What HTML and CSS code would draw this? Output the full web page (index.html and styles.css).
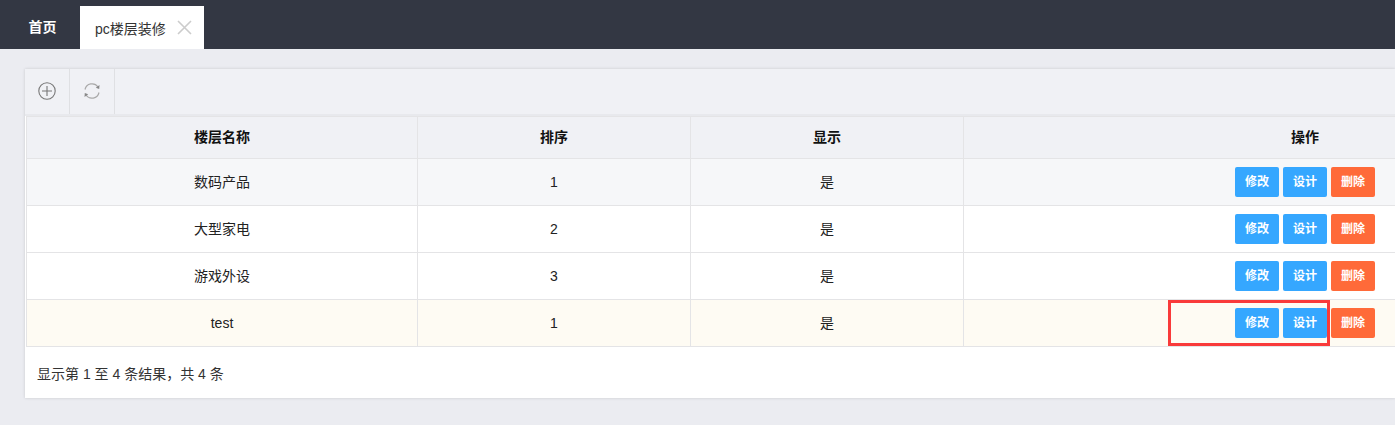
FILE: index.html
```html
<!DOCTYPE html>
<html lang="zh">
<head>
<meta charset="utf-8">
<title>pc楼层装修</title>
<link rel="stylesheet" href="styles.css">
</head>
<body>
<header class="tabbar">
  <a class="tab tab-home">首页</a>
  <a class="tab tab-active">pc楼层装修
    <svg class="tab-close" width="15" height="15" viewBox="0 0 15 15"><path d="M1 1l13 13M14 1L1 14" fill="none" stroke="#ccc" stroke-width="1.600"/></svg>
  </a>
</header>
<main class="content">
  <section class="card">
    <div class="toolbar">
      <button class="tool">
        <svg width="18" height="18" viewBox="0 0 18 18"><circle cx="9" cy="9" r="8.200" fill="none" stroke="#777" stroke-width="1.100"/><path d="M9 4v10M4 9h10" fill="none" stroke="#777" stroke-width="1.100"/></svg>
      </button>
      <button class="tool">
        <svg width="18" height="18" viewBox="0 0 18 18"><path d="M2 7.500A7.200 7.200 0 0 1 15 5" fill="none" stroke="#aaa" stroke-width="1.200"/><path d="M16 10.500A7.200 7.200 0 0 1 3 13" fill="none" stroke="#aaa" stroke-width="1.200"/><path d="M16.500 3l-.3 4-3.400-1.300zM1.500 15l.3-4 3.400 1.300z" fill="#888"/></svg>
      </button>
    </div>
    <table class="grid">
      <thead>
        <tr><th class="c1">楼层名称</th><th class="c2">排序</th><th class="c3">显示</th><th class="c4">操作</th></tr>
      </thead>
      <tbody>
        <tr class="row-hover"><td>数码产品</td><td>1</td><td>是</td><td class="ops"><a class="btn blue">修改</a><a class="btn blue">设计</a><a class="btn orange">删除</a></td></tr>
        <tr><td>大型家电</td><td>2</td><td>是</td><td class="ops"><a class="btn blue">修改</a><a class="btn blue">设计</a><a class="btn orange">删除</a></td></tr>
        <tr><td>游戏外设</td><td>3</td><td>是</td><td class="ops"><a class="btn blue">修改</a><a class="btn blue">设计</a><a class="btn orange">删除</a></td></tr>
        <tr class="row-warm"><td>test</td><td>1</td><td>是</td><td class="ops"><a class="btn blue">修改</a><a class="btn blue">设计</a><a class="btn orange">删除</a></td></tr>
      </tbody>
    </table>
    <div class="pager">显示第 1 至 4 条结果，共 4 条</div>
  </section>
</main>
<div class="callout"></div>
</body>
</html>
```
FILE: styles.css
```css
* { box-sizing: border-box; }
html, body { margin: 0; height: 100%; }
body {
  position: relative;
  overflow: hidden;
  background: #ebecf1;
  font-family: "Liberation Sans", "Noto Sans CJK SC", sans-serif;
  font-size: 14px;
  color: #222;
}
.tabbar {
  display: flex;
  align-items: flex-end;
  height: 49px;
  padding-left: 12px;
  background: #333743;
}
.tab { display: flex; align-items: center; height: 43px; }
.tab-home {
  width: 68px;
  height: 44px;
  justify-content: center;
  padding: 0 7px 2px 0;
  color: #fff;
  font-weight: 700;
}
.tab-active {
  width: 124px;
  padding-left: 15px;
  gap: 11px;
  background: #fff;
  color: #333;
}
.content { padding: 20px 0 0 25px; }
.card {
  width: 1370px;
  height: 329px;
  background: #fff;
  box-shadow: 0 0 3px rgba(0, 0, 0, .15);
}
.toolbar {
  display: flex;
  height: 47px;
  padding-bottom: 1px;
  background: #f0f1f5;
  border-bottom: 2px solid #e8e9ed;
}
.tool {
  display: flex;
  align-items: center;
  justify-content: center;
  width: 45px;
  height: 45px;
  padding: 0 0 1px;
  background: none;
  border: 0;
  border-right: 1px solid #dfe0e3;
}
.grid {
  width: 1369px;
  margin-left: 1px;
  border-collapse: collapse;
  table-layout: fixed;
}
.grid th, .grid td {
  padding: 0;
  text-align: center;
  font-size: 14px;
  line-height: 20px;
  border: 1px solid #e4e4e6;
}
.grid th:last-child, .grid td:last-child { border-right: 0; }
.grid thead tr { height: 42px; background: #f0f1f5; }
.grid th { padding-bottom: 2px; color: #111; font-weight: 700; }
.grid tbody tr { height: 47px; }
.c1 { width: 391px; }
.c2, .c3 { width: 273px; }
.grid .c4 { text-align: left; padding-left: 327px; }
.grid .ops { text-align: right; padding-right: 20px; font-size: 0; }
.row-hover { background: #f6f7f9; }
.row-warm { background: #fefbf3; }
.btn {
  display: inline-block;
  width: 44px;
  height: 30px;
  margin-left: 4px;
  border-radius: 2px;
  font-size: 12px;
  font-weight: 700;
  line-height: 30px;
  text-align: center;
  color: #fff;
  vertical-align: middle;
}
.blue { background: #35a7ff; }
.orange { background: #ff6a39; }
.pager { padding: 18px 12px; color: #333; line-height: 19px; }
.callout {
  position: absolute;
  left: 1168px;
  top: 300px;
  width: 162px;
  height: 46px;
  border: 3px solid #f93a3a;
}
```
